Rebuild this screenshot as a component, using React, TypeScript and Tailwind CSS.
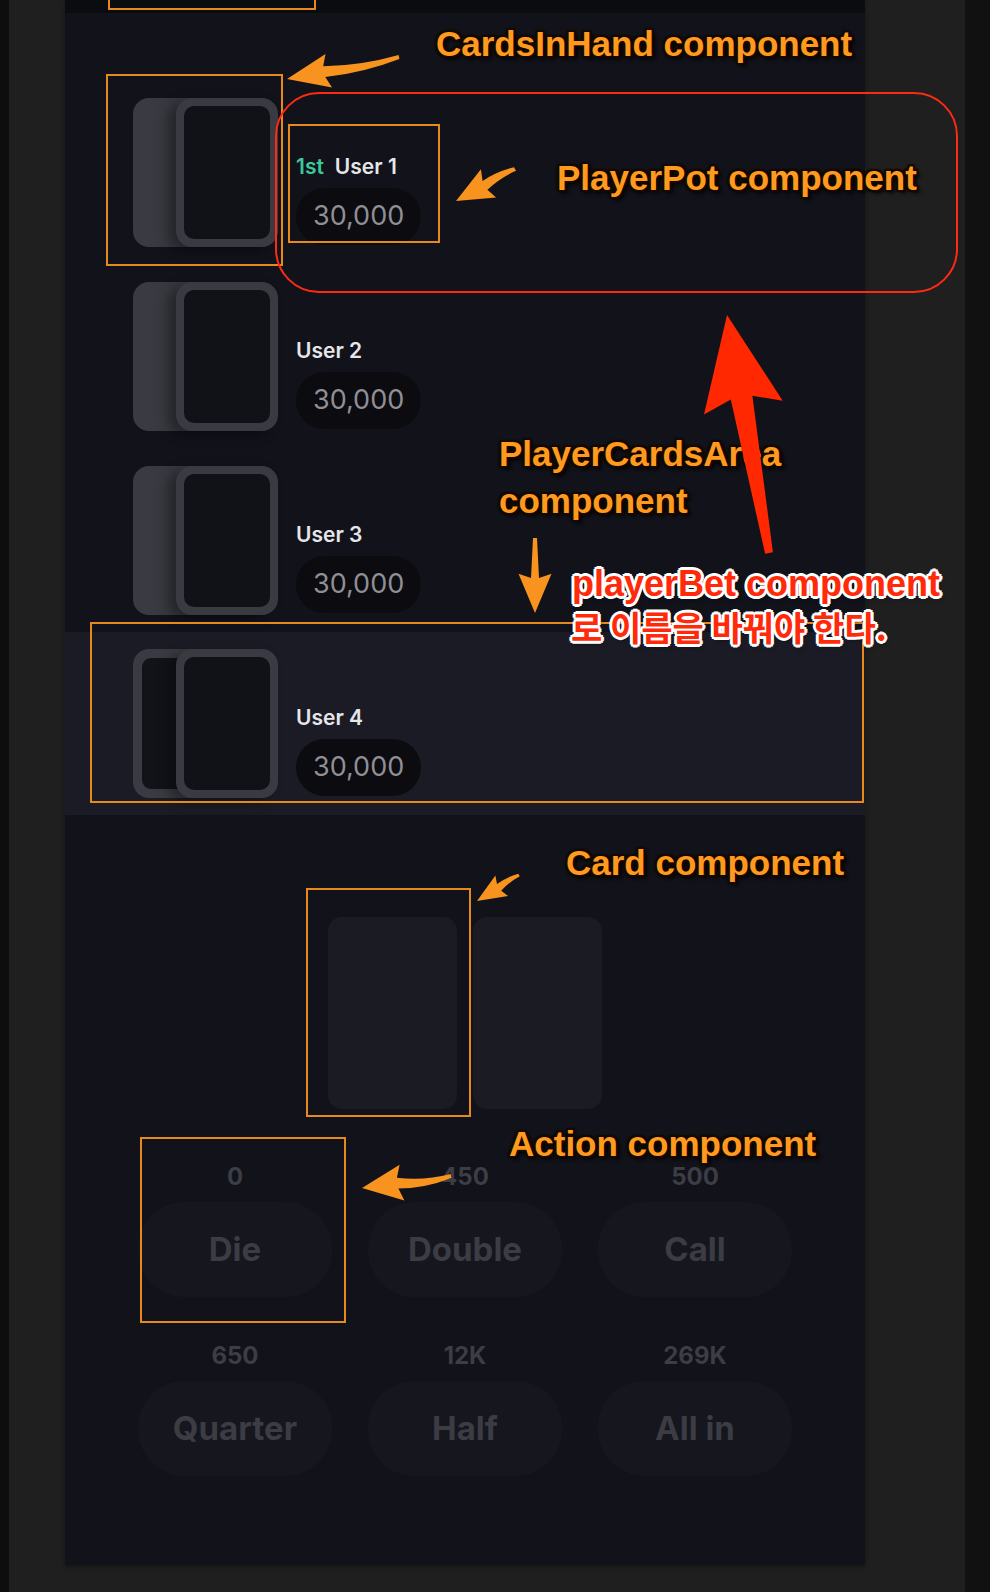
import React from 'react'

type Player = { name: string; amount: string; rank?: string; active?: boolean }

const PLAYERS: Player[] = [
    { name: 'User 1', amount: '30,000', rank: '1st' },
    { name: 'User 2', amount: '30,000' },
    { name: 'User 3', amount: '30,000' },
    { name: 'User 4', amount: '30,000', active: true },
]

const ACTIONS = [
    { label: 'Die', amount: '0' },
    { label: 'Double', amount: '450' },
    { label: 'Call', amount: '500' },
    { label: 'Quarter', amount: '650' },
    { label: 'Half', amount: '12K' },
    { label: 'All in', amount: '269K' },
]

function CardsInHand({ active }: { active?: boolean }) {
    return (
        <div className="flex shrink-0">
            {active ? (
                <div className="w-[102px] h-[149px] rounded-[16px] bg-[#3a3b42] p-[9px]">
                    <div className="h-full w-full rounded-[9px] bg-[#121319]" />
                </div>
            ) : (
                <div className="w-[102px] h-[149px] rounded-[16px] bg-gradient-to-r from-[#3b3c43] to-[#33343b]" />
            )}
            <div className="relative -ml-[59px] w-[102px] h-[149px] rounded-[16px] bg-[#3a3b42] p-[8px] shadow-[-8px_4px_12px_rgba(0,0,0,0.35)]">
                <div className="h-full w-full rounded-[10px] bg-[#111218]" />
            </div>
        </div>
    )
}

function PlayerPot({ name, amount, rank }: Player) {
    return (
        <div className="ml-[18px] mb-[2px] flex flex-col items-start">
            <div className="flex items-center gap-[11px] text-[21px] leading-[24px] font-semibold text-[#e6e6ea]">
                {rank && <span className="text-[#3cc89b]">{rank}</span>}
                <span>{name}</span>
            </div>
            <div className="mt-[9px] flex h-[57px] items-center rounded-full bg-[#0b0b10] px-[17px] text-[27px] text-[#8f8f95]">
                {amount}
            </div>
        </div>
    )
}

function PlayerBet({ player }: { player: Player }) {
    return (
        <div
            className={`flex items-end pl-[68px] pb-[17px] ${
                player.active ? 'h-[183px] bg-[#1a1b24]' : 'h-[184px]'
            }`}
        >
            <CardsInHand active={player.active} />
            <PlayerPot {...player} />
        </div>
    )
}

function Action({ label, amount }: { label: string; amount: string }) {
    return (
        <div className="flex flex-col items-center">
            <span className="text-[24px] leading-[24px] font-bold text-[#3c3d45]">{amount}</span>
            <button className="mt-[13px] h-[95px] w-[194px] rounded-[46px] bg-[#15161e] text-[33px] font-bold text-[#3b3c44]">
                {label}
            </button>
        </div>
    )
}

function arrowPath(
    tx: number,
    ty: number,
    px: number,
    py: number,
    L: number,
    W: number,
    S: number,
    s: number,
    bend = 0
) {
    const dx = px - tx
    const dy = py - ty
    const len = Math.hypot(dx, dy)
    const ux = dx / len
    const uy = dy / len
    const nx = -uy
    const ny = ux
    const bx = px - ux * L
    const by = py - uy * L
    const cx = (tx + bx) / 2 + nx * bend
    const cy = (ty + by) / 2 + ny * bend
    const wx = px - ux * L * 1.12
    const wy = py - uy * L * 1.12
    const p = (x: number, y: number) => `${x.toFixed(1)} ${y.toFixed(1)}`
    const m = (S + s) / 4
    return [
        `M ${p(tx + (nx * s) / 2, ty + (ny * s) / 2)}`,
        `Q ${p(cx + nx * m, cy + ny * m)} ${p(bx + (nx * S) / 2, by + (ny * S) / 2)}`,
        `L ${p(wx + (nx * W) / 2, wy + (ny * W) / 2)}`,
        `L ${p(px, py)}`,
        `L ${p(wx - (nx * W) / 2, wy - (ny * W) / 2)}`,
        `L ${p(bx - (nx * S) / 2, by - (ny * S) / 2)}`,
        `Q ${p(cx - nx * m, cy - ny * m)} ${p(tx - (nx * s) / 2, ty - (ny * s) / 2)}`,
        'Z',
    ].join(' ')
}

const orangeLabel =
    "absolute whitespace-nowrap font-['Liberation_Sans',Arial,sans-serif] text-[35px] font-bold leading-none text-[#ff9a1f] [text-shadow:-2px_0_1px_#140a00,2px_0_1px_#140a00,0_-2px_1px_#140a00,0_2px_1px_#140a00,-2px_-2px_1px_#140a00,2px_2px_1px_#140a00,-2px_2px_1px_#140a00,2px_-2px_1px_#140a00,3px_3px_4px_#000]"

const redLabel =
    "absolute whitespace-nowrap font-bold leading-none text-[#ff2a0a] [text-shadow:-3px_0_0_#fff,3px_0_0_#fff,0_-3px_0_#fff,0_3px_0_#fff,-2px_-2px_0_#fff,2px_2px_0_#fff,-2px_2px_0_#fff,2px_-2px_0_#fff,2px_3px_4px_rgba(0,0,0,0.5)]"

const box = 'absolute border-2 border-[#e8891d]'

function Annotations() {
    return (
        <div className="pointer-events-none absolute inset-0">
            <div className={`${box} left-[108px] top-[-10px] w-[208px] h-[20px]`} />
            <div className={`${box} left-[106px] top-[74px] w-[177px] h-[192px]`} />
            <div className={`${box} left-[288px] top-[124px] w-[152px] h-[119px]`} />
            <div className={`${box} left-[90px] top-[622px] w-[774px] h-[181px]`} />
            <div className={`${box} left-[306px] top-[888px] w-[165px] h-[229px]`} />
            <div className={`${box} left-[140px] top-[1137px] w-[206px] h-[186px]`} />
            <div className="absolute left-[275px] top-[92px] h-[201px] w-[683px] rounded-[44px] border-2 border-[#ff2a12]" />

            <div className={`${orangeLabel} left-[436px] top-[26px]`}>CardsInHand component</div>
            <div className={`${orangeLabel} left-[557px] top-[160px]`}>PlayerPot component</div>
            <div className={`${orangeLabel} left-[499px] top-[436px]`}>PlayerCardsArea</div>
            <div className={`${orangeLabel} left-[499px] top-[483px]`}>component</div>
            <div className={`${orangeLabel} left-[566px] top-[845px]`}>Card component</div>
            <div className={`${orangeLabel} left-[509px] top-[1126px]`}>Action component</div>

            <div className={`${redLabel} left-[572px] top-[566px] font-['Liberation_Sans',Arial,sans-serif] text-[36px]`}>
                playerBet component
            </div>
            <div className={`${redLabel} left-[571px] top-[610px] font-['Noto_Sans_CJK_KR',sans-serif] text-[34px]`}>
                로 이름을 바꿔야 한다.
            </div>

            <svg className="absolute left-0 top-0" width="990" height="1592" viewBox="0 0 990 1592">
                <g fill="#f7931e">
                    <path d={arrowPath(399, 57, 287, 79, 38, 34, 11, 4, -5)} />
                    <path d={arrowPath(515, 169, 456, 201, 33, 32, 10, 4, 3)} />
                    <path d={arrowPath(535, 538, 535, 613, 35, 33, 8, 4)} />
                    <path d={arrowPath(519, 875, 477, 901, 26, 24, 8, 3, 2)} />
                    <path d={arrowPath(451, 1176, 362, 1188, 36, 36, 11, 4, -5)} />
                </g>
                <path fill="#ff2800" d={arrowPath(769, 553, 727, 315, 84, 80, 22, 8)} />
            </svg>
        </div>
    )
}

export default function App() {
    return (
        <div className="relative flex h-[1592px] w-[990px] overflow-hidden bg-[#1f1f1f] font-['Inter',sans-serif]">
            <div className="w-[9px] shrink-0 bg-[#0e0e0e]" />
            <div className="ml-[56px] flex h-[1565px] w-[800px] shrink-0 flex-col bg-[#11121a] shadow-[0_2px_4px_rgba(0,0,0,0.3)]">
                <div className="h-[13px] bg-[#0b0c10]" />
                <div className="mt-[67px] flex flex-col">
                    {PLAYERS.map((p) => (
                        <PlayerBet key={p.name} player={p} />
                    ))}
                </div>
                <div className="mt-[102px] flex justify-center gap-[16px]">
                    <div className="h-[192px] w-[129px] rounded-[14px] bg-[#1a1b23]" />
                    <div className="h-[192px] w-[129px] rounded-[14px] bg-[#1a1b23]" />
                </div>
                <div className="mx-auto mt-[56px] grid w-[690px] grid-cols-3 gap-y-[47px]">
                    {ACTIONS.map((a) => (
                        <Action key={a.label} {...a} />
                    ))}
                </div>
            </div>
            <div className="ml-[100px] w-[25px] shrink-0 bg-[#111111]" />
            <Annotations />
        </div>
    )
}
